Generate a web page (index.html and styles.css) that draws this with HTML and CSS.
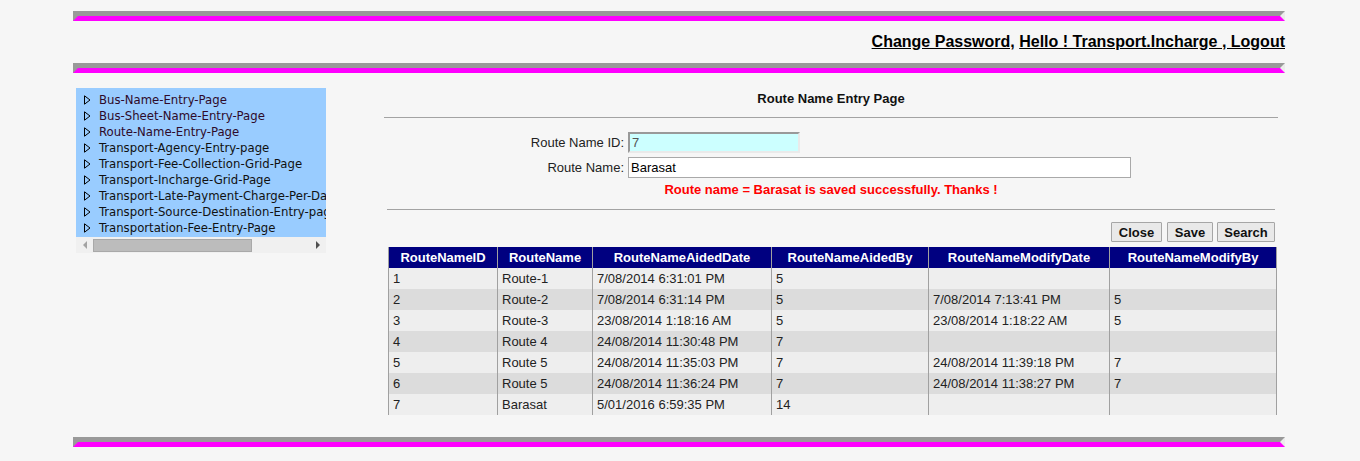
FILE: index.html
```html
<!DOCTYPE html>
<html>
<head>
<meta charset="utf-8">
<title>Route Name Entry Page</title>
<link rel="stylesheet" href="styles.css">
</head>
<body>
<div class="wrap">
  <div class="bar"></div>
  <div class="header">
    <a href="#" class="hlink">Change Password,</a> <a href="#" class="hlink">Hello ! Transport.Incharge , Logout</a>
  </div>
  <div class="bar"></div>
  <div class="content">
    <div class="sidebar">
      <ul class="tree">
        <li class="visited"><span class="tri"><svg width="7" height="10" viewBox="0 0 7 10"><path d="M0.5 0.8 L6 5 L0.5 9.2 Z" fill="none" stroke="#000" stroke-width="1"/></svg></span>Bus-Name-Entry-Page</li>
        <li class="visited"><span class="tri"><svg width="7" height="10" viewBox="0 0 7 10"><path d="M0.5 0.8 L6 5 L0.5 9.2 Z" fill="none" stroke="#000" stroke-width="1"/></svg></span>Bus-Sheet-Name-Entry-Page</li>
        <li class="visited"><span class="tri"><svg width="7" height="10" viewBox="0 0 7 10"><path d="M0.5 0.8 L6 5 L0.5 9.2 Z" fill="none" stroke="#000" stroke-width="1"/></svg></span>Route-Name-Entry-Page</li>
        <li><span class="tri"><svg width="7" height="10" viewBox="0 0 7 10"><path d="M0.5 0.8 L6 5 L0.5 9.2 Z" fill="none" stroke="#000" stroke-width="1"/></svg></span>Transport-Agency-Entry-page</li>
        <li><span class="tri"><svg width="7" height="10" viewBox="0 0 7 10"><path d="M0.5 0.8 L6 5 L0.5 9.2 Z" fill="none" stroke="#000" stroke-width="1"/></svg></span>Transport-Fee-Collection-Grid-Page</li>
        <li><span class="tri"><svg width="7" height="10" viewBox="0 0 7 10"><path d="M0.5 0.8 L6 5 L0.5 9.2 Z" fill="none" stroke="#000" stroke-width="1"/></svg></span>Transport-Incharge-Grid-Page</li>
        <li><span class="tri"><svg width="7" height="10" viewBox="0 0 7 10"><path d="M0.5 0.8 L6 5 L0.5 9.2 Z" fill="none" stroke="#000" stroke-width="1"/></svg></span>Transport-Late-Payment-Charge-Per-Day-Entry-Page</li>
        <li><span class="tri"><svg width="7" height="10" viewBox="0 0 7 10"><path d="M0.5 0.8 L6 5 L0.5 9.2 Z" fill="none" stroke="#000" stroke-width="1"/></svg></span>Transport-Source-Destination-Entry-page</li>
        <li><span class="tri"><svg width="7" height="10" viewBox="0 0 7 10"><path d="M0.5 0.8 L6 5 L0.5 9.2 Z" fill="none" stroke="#000" stroke-width="1"/></svg></span>Transportation-Fee-Entry-Page</li>
      </ul>
      <div class="hscroll">
        <span class="arr"><svg width="4" height="8" viewBox="0 0 4 8"><path d="M4 0 L0 4 L4 8 Z" fill="#a3a3a3"/></svg></span>
        <span class="thumb"></span>
        <span class="arr right"><svg width="4" height="8" viewBox="0 0 4 8"><path d="M0 0 L4 4 L0 8 Z" fill="#505050"/></svg></span>
      </div>
    </div>
    <div class="main">
      <div class="title">Route Name Entry Page</div>
      <div class="rule"></div>
      <div class="form">
        <label class="lbl">Route Name ID:</label>
        <div><input class="inp id" type="text" value="7" readonly></div>
        <label class="lbl">Route Name:</label>
        <div><input class="inp name" type="text" value="Barasat"></div>
      </div>
      <div class="msg">Route name = Barasat is saved successfully. Thanks !</div>
      <div class="inner">
        <div class="rule"></div>
        <div class="buttons">
          <button class="btn b-close">Close</button>
          <button class="btn b-save">Save</button>
          <button class="btn b-search">Search</button>
        </div>
        <table class="grid">
          <colgroup>
            <col class="c1"><col class="c2"><col class="c3"><col class="c4"><col class="c5"><col class="c6">
          </colgroup>
          <thead>
            <tr><th>RouteNameID</th><th>RouteName</th><th>RouteNameAidedDate</th><th>RouteNameAidedBy</th><th>RouteNameModifyDate</th><th>RouteNameModifyBy</th></tr>
          </thead>
          <tbody>
            <tr><td>1</td><td>Route-1</td><td>7/08/2014 6:31:01 PM</td><td>5</td><td></td><td></td></tr>
            <tr><td>2</td><td>Route-2</td><td>7/08/2014 6:31:14 PM</td><td>5</td><td>7/08/2014 7:13:41 PM</td><td>5</td></tr>
            <tr><td>3</td><td>Route-3</td><td>23/08/2014 1:18:16 AM</td><td>5</td><td>23/08/2014 1:18:22 AM</td><td>5</td></tr>
            <tr><td>4</td><td>Route 4</td><td>24/08/2014 11:30:48 PM</td><td>7</td><td></td><td></td></tr>
            <tr><td>5</td><td>Route 5</td><td>24/08/2014 11:35:03 PM</td><td>7</td><td>24/08/2014 11:39:18 PM</td><td>7</td></tr>
            <tr><td>6</td><td>Route 5</td><td>24/08/2014 11:36:24 PM</td><td>7</td><td>24/08/2014 11:38:27 PM</td><td>7</td></tr>
            <tr><td>7</td><td>Barasat</td><td>5/01/2016 6:59:35 PM</td><td>14</td><td></td><td></td></tr>
          </tbody>
        </table>
      </div>
    </div>
  </div>
  <div class="bar"></div>
</div>
</body>
</html>
```

FILE: styles.css
```css
html, body {
  margin: 0;
  padding: 0;
  background: #f6f6f6;
}
body {
  font-family: "Liberation Sans", Arial, sans-serif;
  font-size: 13px;
  color: #1e1e1e;
  overflow: hidden;
}
.wrap {
  width: 1212px;
  margin-left: 73px;
  padding-top: 11px;
}
.bar {
  box-sizing: border-box;
  width: 100%;
  height: 10px;
  border-top: 5px solid #999999;
  border-bottom: 5px solid #ff00ff;
  border-left: 5px solid #999999;
  border-right: 5px solid #ececec;
}
.header {
  height: 42px;
  box-sizing: border-box;
  padding-top: 11px;
  text-align: right;
  font-size: 16px;
  font-weight: bold;
  line-height: 19px;
}
.hlink {
  color: #000;
  text-decoration: underline;
}
.content {
  display: flex;
  height: 364px;
}
.sidebar {
  width: 250px;
  margin-left: 3px;
  margin-top: 15px;
}
.tree {
  list-style: none;
  margin: 0;
  padding: 4px 0 1px 8px;
  background: #99ccff;
  overflow: hidden;
  white-space: nowrap;
  font-family: "DejaVu Sans Condensed", "DejaVu Sans", sans-serif;
  font-size: 13px;
  line-height: 16px;
  color: #111;
}
.tree li {
  display: flex;
  align-items: center;
  height: 16px;
}
.tree li.visited {
  color: #2e0a2a;
}
.tri {
  display: inline-flex;
  width: 15px;
  flex: none;
}
.hscroll {
  display: flex;
  align-items: center;
  height: 16px;
  background: #f0f0f0;
}
.arr {
  display: inline-flex;
  width: 17px;
  justify-content: center;
  flex: none;
}
.thumb {
  width: 157px;
  height: 11px;
  background: #bcbcbc;
  border: 1px solid #a9a9a9;
}
.arr.right {
  margin-left: auto;
}
.main {
  width: 894px;
  margin-left: 58px;
  margin-top: 15px;
}
.title {
  text-align: center;
  font-weight: bold;
  line-height: 22px;
  color: #111;
}
.rule {
  height: 0;
  border-top: 1px solid #a3a3a3;
  margin-top: 7px;
}
.form {
  display: grid;
  grid-template-columns: 240px 1fr;
  column-gap: 4px;
  row-gap: 4px;
  margin-top: 14px;
  align-items: center;
}
.lbl {
  text-align: right;
  font-size: 13px;
  color: #222;
}
.inp {
  box-sizing: border-box;
  font-family: "Liberation Sans", Arial, sans-serif;
  font-size: 13px;
  height: 21px;
  margin: 0;
  padding: 0 2px;
  display: block;
}
.inp.id {
  width: 172px;
  background: #ccffff;
  color: #555;
  border: 2px solid;
  border-color: #999 #eaeaea #eaeaea #999;
}
.inp.name {
  width: 503px;
  background: #fff;
  color: #000;
  border: 1px solid #a9a9a9;
}
.msg {
  text-align: center;
  color: #ff0000;
  font-weight: bold;
  line-height: 16px;
  margin-top: 4px;
}
.inner {
  margin: 0 3px;
}
.inner .rule {
  margin-top: 11px;
}
.buttons {
  display: flex;
  justify-content: flex-end;
  margin-top: 12px;
}
.btn {
  box-sizing: border-box;
  height: 20px;
  padding: 0;
  font-family: "Liberation Sans", Arial, sans-serif;
  font-size: 13px;
  font-weight: bold;
  color: #111;
  background: #e9e9e9;
  border: 1px solid #a6a6a6;
  border-radius: 1px;
  text-align: center;
}
.b-close { width: 51px; margin-right: 5px; }
.b-save { width: 46px; margin-right: 4px; }
.b-search { width: 58px; }
.grid {
  border-collapse: collapse;
  table-layout: fixed;
  width: 888px;
  margin-left: 1px;
  margin-top: 5px;
}
.c1 { width: 109px; }
.c2 { width: 95px; }
.c3 { width: 179px; }
.c4 { width: 157px; }
.c5 { width: 181px; }
.c6 { width: 167px; }
.grid th {
  background: #000080;
  color: #fff;
  font-weight: bold;
  height: 21px;
  padding: 0;
  border-left: 1px solid #a0a0a0;
  border-right: 1px solid #a0a0a0;
  text-align: center;
  white-space: nowrap;
}
.grid td {
  height: 21px;
  padding: 0 0 0 4px;
  border-left: 1px solid #a0a0a0;
  border-right: 1px solid #a0a0a0;
  color: #222;
  white-space: nowrap;
}
.grid tbody tr:nth-child(odd) td {
  background: #eeeeee;
}
.grid tbody tr:nth-child(even) td {
  background: #dcdcdc;
}
```
